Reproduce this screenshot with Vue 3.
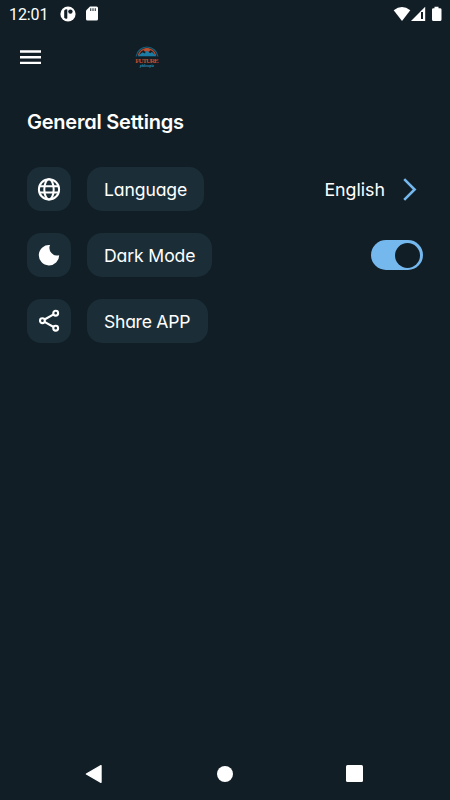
<script setup>
import { ref } from 'vue'

const darkMode = ref(true)
const rows = [
  { id: 'language', label: 'Language' },
  { id: 'dark', label: 'Dark Mode' },
  { id: 'share', label: 'Share APP' }
]
</script>

<template>
  <div class="screen">
    <div class="status">
      <span class="time">12:01</span>
      <svg class="app-icon" width="16" height="16" viewBox="0 0 16 16">
        <circle cx="8" cy="8" r="7.6" fill="#fff" />
        <path d="M4.2 4.4Q6 2.8 7.3 3.4V12.2Q6 13.6 4.2 11.7Z" fill="#111e26" />
        <circle cx="10.4" cy="5.6" r="2.2" fill="#111e26" />
      </svg>
      <svg class="sd" width="12" height="15" viewBox="0 0 12 15">
        <path d="M4 .5H10.5Q12 .5 12 2V13Q12 14.5 10.5 14.5H1.5Q0 14.5 0 13V4.5Z" fill="#fff" />
        <path d="M4.7 2.2V5M7 2.2V5M9.3 2.2V5" stroke="#3b454b" stroke-width="1.2" />
      </svg>
      <svg class="signals" width="50" height="16" viewBox="0 0 50 16">
        <path d="M.7 4.2Q9 -2.2 17.3 4.2L9 15Z" fill="#fff" />
        <path d="M32.2.8V15H18Z" fill="#fff" />
        <path d="M29 6V13" stroke="#111e26" stroke-width="2" />
        <path d="M41.5.8H45.5V2.2H47Q48.5 2.2 48.5 3.5V13.5Q48.5 15 47 15H40.5Q39 15 39 13.5V3.5Q39 2.2 40.5 2.2H41.5Z" fill="#fff" />
      </svg>
    </div>

    <header class="bar">
      <svg width="21" height="15" viewBox="0 0 21 15">
        <path d="M0 1.5H21M0 7.2H21M0 12.9H21" stroke="#fff" stroke-width="2.4" />
      </svg>
      <svg class="logo" width="26" height="26" viewBox="0 0 26 26">
        <path d="M2.1 12.5A11 11 0 0 1 23.9 12.5" fill="none" stroke="#175f7d" stroke-width="1.2" />
        <path d="M4.3 11.5A9 9 0 0 1 21.7 11.5" fill="none" stroke="#b5482a" stroke-width="1.5" />
        <path d="M9.5 6Q13 2.2 16.5 6L15 7.7H11Z" fill="#b85232" />
        <path d="M3.5 12.2L8.5 8.2L10.5 9.4L13 6.4L16 9.3L18 8L22.5 12.2Z" fill="#1d7ca4" />
        <text x="1.3" y="19.2" textLength="23.4" lengthAdjust="spacing" class="logo-name">FUTURE</text>
        <text x="6" y="23.4" textLength="14" lengthAdjust="spacingAndGlyphs" class="logo-sub">philosopia</text>
      </svg>
    </header>

    <main>
      <h1>General Settings</h1>
      <div class="rows">
        <div v-for="row in rows" :key="row.id" class="row">
          <div class="tile">
            <svg v-if="row.id === 'language'" width="24" height="24" viewBox="0 0 24 24" fill="none" stroke="#fff" stroke-width="2">
              <circle cx="12" cy="12.4" r="10.1" />
              <ellipse cx="12" cy="12.4" rx="4.7" ry="10.1" />
              <path d="M3 9.2H21M3 15.6H21" />
            </svg>
            <svg v-else-if="row.id === 'dark'" width="24" height="24" viewBox="0 0 24 24">
              <path d="M13 2.1A7.6 7.6 0 0 0 22.2 12.2A10.2 10.2 0 1 1 13 2.1Z" fill="#fff" />
            </svg>
            <svg v-else width="24" height="24" viewBox="0 0 24 24" fill="none" stroke="#fff" stroke-width="2.1">
              <circle cx="5.4" cy="11.7" r="2.4" />
              <circle cx="18.7" cy="4.2" r="2.4" />
              <circle cx="18.7" cy="19.2" r="2.4" />
              <path d="M7.5 10.5L16.6 5.4M7.5 12.9L16.6 18" />
            </svg>
          </div>
          <div class="pill" :class="row.id">{{ row.label }}</div>
          <div v-if="row.id === 'language'" class="value">
            <span>English</span>
            <svg width="14" height="23" viewBox="0 0 14 23">
              <path d="M1.2 1.2L11.6 11.5L1.2 21.8" fill="none" stroke="#75b8ee" stroke-width="2.6" />
            </svg>
          </div>
          <button v-if="row.id === 'dark'" class="switch" :class="{ on: darkMode }" aria-label="Dark Mode" @click="darkMode = !darkMode"><i></i></button>
        </div>
      </div>
    </main>

    <nav class="nav">
      <svg width="18" height="20" viewBox="0 0 18 20"><path d="M16 1.7V18.3L1.4 10Z" fill="#fff" stroke="#fff" stroke-width="1.4" stroke-linejoin="round" /></svg>
      <span class="home"></span>
      <span class="recent"></span>
    </nav>
  </div>
</template>

<style>
body { background: #111e26; }
</style>

<style scoped>
.screen {
  box-sizing: border-box;
  width: 450px;
  height: 800px;
  display: flex;
  flex-direction: column;
  background: #111e26;
  color: #fff;
  font-family: Inter, sans-serif;
  font-feature-settings: "cv11";
  overflow: hidden;
}
.status { display: flex; align-items: center; height: 27px; padding: 0 7px 0 9px; }
.time { width: 51px; padding-top: 1px; font: 400 16px/27px Roboto, sans-serif; letter-spacing: -.1px; white-space: nowrap; }
.sd { margin-left: 10px; }
.signals { margin-left: auto; }
.bar { display: flex; align-items: center; height: 60px; padding-left: 20px; }
.logo { margin-left: 93px; overflow: visible; }
.logo-name { font: bold 7px "Liberation Serif", serif; fill: #c04c2e; }
.logo-sub { font: italic bold 4.2px "Liberation Serif", serif; fill: #2d9bc8; }
main { flex: 1; padding: 22px 27px 0; }
h1 { margin: 0; font-size: 20px; line-height: 27px; font-weight: 600; letter-spacing: -.23px; }
.rows { display: flex; flex-direction: column; gap: 21.8px; padding-top: 31px; }
.row { display: flex; align-items: center; height: 44px; }
.tile { width: 44px; height: 44px; border-radius: 14px; background: #1b2e38; display: flex; align-items: center; justify-content: center; }
.pill { box-sizing: border-box; height: 44px; margin-left: 16px; padding: 1px 0 0 17px; border-radius: 15px; background: #1b2e38; font-size: 17.6px; line-height: 44px; letter-spacing: -.12px; white-space: nowrap; }
.pill.language { width: 116.5px; }
.pill.dark { width: 125px; }
.pill.share { width: 121px; letter-spacing: -.28px; }
.value { display: flex; align-items: center; gap: 18px; margin-left: auto; padding-right: 6px; font-size: 17.8px; }
.value span { padding-top: 1px; }
.switch { box-sizing: border-box; display: flex; width: 52px; height: 30px; margin: 1px 0 0 auto; padding: 2.5px; border: 0; border-radius: 15px; background: #42515a; }
.switch.on { justify-content: flex-end; padding-right: 3.5px; background: #75b8ee; }
.switch i { width: 25px; height: 25px; border-radius: 50%; background: #111e26; }
.nav { display: flex; align-items: center; justify-content: space-between; height: 53px; padding: 0 87px 0 85px; }
.home { width: 16px; height: 16px; border-radius: 50%; background: #fff; }
.recent { width: 17px; height: 17px; border-radius: 1.5px; background: #fff; }
</style>
